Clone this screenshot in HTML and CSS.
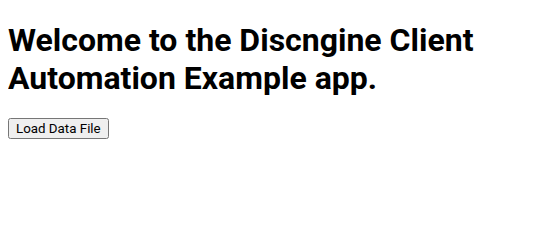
FILE: index.html
```html
<!DOCTYPE html>
<html lang="en">
<head>
    <meta charset="UTF-8">
    <title>Discngine Client Automation Example</title>
    <link rel="stylesheet" href="styles.css">
</head>
<body>
<div id="app">
    <h1 class="title">Welcome to the Discngine Client Automation Example app.</h1>
    <button class="load-btn">Load Data File</button>
</div>
</body>
</html>
```

FILE: styles.css
```css
body{
    font-family: Roboto, "Noto Sans", sans-serif;
    color: #000;
    background: #fff;
}
.title{
    font-size: 32px;
    font-weight: bold;
    margin: 13px 0 21px;
}
.load-btn{
    font-family: Roboto, sans-serif;
    font-size: 13.33px;
}
```
